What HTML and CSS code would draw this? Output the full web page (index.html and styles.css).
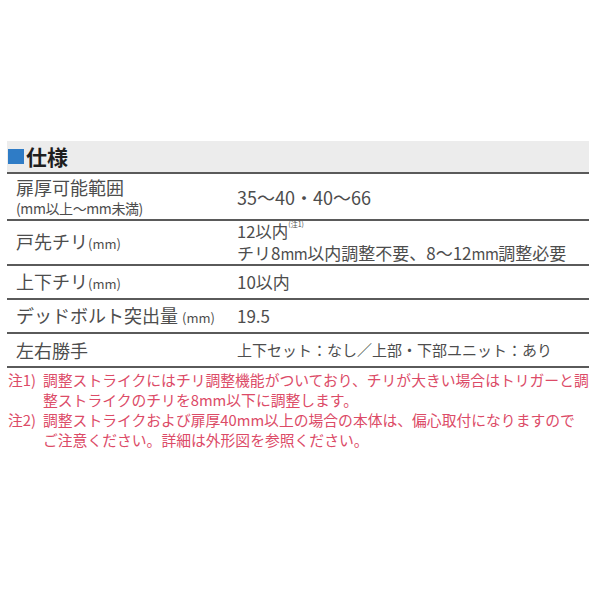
FILE: index.html
```html
<!DOCTYPE html>
<html lang="ja">
<head>
<meta charset="utf-8">
<link rel="stylesheet" href="styles.css">
</head>
<body>
<div class="page">
  <div class="spec">
    <div class="title"><span class="sq"></span><span class="title-text">仕様</span></div>
    <div class="row r1">
      <div class="label"><div>扉厚可能範囲</div><div class="sub">(mm以上～mm未満)</div></div>
      <div class="value wide">35～40・40～66</div>
    </div>
    <div class="row r2">
      <div class="label">戸先チリ<span class="mm">(mm)</span></div>
      <div class="value two"><div class="l1">12以内<sup class="note">(注1)</sup></div><div class="l2">チリ8<span class="mmv">mm</span>以内調整不要、8～12<span class="mmv">mm</span>調整必要</div></div>
    </div>
    <div class="row r3">
      <div class="label">上下チリ<span class="mm">(mm)</span></div>
      <div class="value">10以内</div>
    </div>
    <div class="row r4">
      <div class="label">デッドボルト突出量 <span class="mm">(mm)</span></div>
      <div class="value">19.5</div>
    </div>
    <div class="row r5">
      <div class="label">左右勝手</div>
      <div class="value small">上下セット：なし／上部・下部ユニット：あり</div>
    </div>
    <div class="notes">
      <div class="n"><span class="nh">注1)</span><span class="nb">調整ストライクにはチリ調整機能がついており、チリが大きい場合はトリガーと調整ストライクのチリを8mm以下に調整します。</span></div>
      <div class="n"><span class="nh">注2)</span><span class="nb">調整ストライクおよび扉厚40mm以上の場合の本体は、偏心取付になりますのでご注意ください。詳細は外形図を参照ください。</span></div>
    </div>
  </div>
</div>
</body>
</html>
```
FILE: styles.css
```css
html, body { margin: 0; padding: 0; background: #fff; }
body { font-family: "Noto Sans CJK JP", "Noto Sans", sans-serif; color: #4d4d4d; }
.page { padding: 141px 11px 0 7px; }
.spec { width: 582px; }
.title { height: 31px; background: #ececec; border-bottom: 2px solid #5a5a5a; display: flex; align-items: center; }
.sq { width: 16px; height: 15px; background: #2f7cc6; margin: 0 2px 0 1px; }
.title-text { font-size: 21px; font-weight: 700; color: #1e1e1e; line-height: 1; }
.row { display: flex; align-items: center; border-bottom: 2px solid #5a5a5a; }
.r1 { height: 45px; }
.r2 { height: 43px; }
.r3 { height: 32px; }
.r4 { height: 32px; }
.r5 { height: 32px; }
.label { width: 221px; padding-left: 9px; font-size: 18px; line-height: 22px; }
.sub { font-size: 14px; line-height: 17px; letter-spacing: -0.4px; margin-top: 2px; }
.mm { font-size: 13px; }
.value { font-size: 17px; line-height: 20px; }
.value.wide { font-size: 18px; }
.value.two .l1 { line-height: 21px; font-size: 16.5px; }
.value.two .l2 { line-height: 21px; }
.value.small { font-size: 15px; }
.mmv { font-size: 15px; letter-spacing: -0.5px; }
.note { font-size: 7px; line-height: 7px; vertical-align: top; }
.notes { color: #dc4b67; font-size: 14.8px; line-height: 20px; padding-top: 2px; }
.n { display: flex; }
.nh { width: 35px; flex: none; padding-left: 1px; }
.nb { flex: 1; }
```
